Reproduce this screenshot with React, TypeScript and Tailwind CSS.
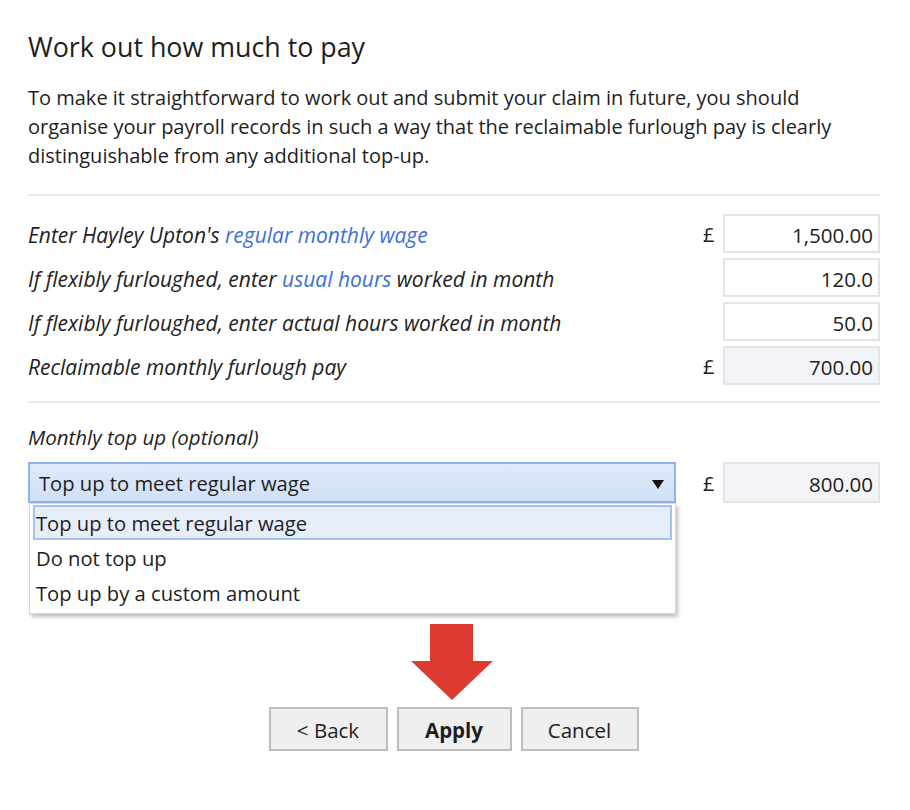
import React from "react";

const font = { fontFamily: '"Open Sans", "Noto Sans", sans-serif' };

function Row({ label, currency, value, readOnly }: { label: React.ReactNode; currency?: boolean; value: string; readOnly?: boolean }) {
  return (
    <div className="flex items-center h-[39px]">
      <div className="flex-1 italic text-[21px] text-[#222] pt-[4px]">{label}</div>
      <div className="w-[20px] text-[20px] text-[#222] pt-[3px]">{currency ? "£" : ""}</div>
      <div
        className={`w-[157px] h-[39px] border-2 border-[#e4e4e4] flex items-center justify-end pr-[5px] pt-[4px] text-[20.5px] text-[#222] ${readOnly ? "bg-[#f3f4f8]" : "bg-white"}`}
      >
        {value}
      </div>
    </div>
  );
}

export default function App() {
  const link = "text-[#3d6fd8]";
  return (
    <div className="w-[910px] h-[810px] bg-white px-[28px] pt-[28px] text-[#1e1e1e]" style={font}>
      <h1 className="text-[26.8px] leading-[38px]">Work out how much to pay</h1>
      <p className="mt-[17px] text-[20px] leading-[29px]">
        To make it straightforward to work out and submit your claim in future, you should
        <br />
        organise your payroll records in such a way that the reclaimable furlough pay is clearly
        <br />
        distinguishable from any additional top-up.
      </p>
      <div className="mt-[24px] mr-[2px] border-t-2 border-[#ececec]" />

      <div className="mt-[18px] mr-[2px] flex flex-col gap-[5px]">
        <Row
          label={<>Enter Hayley Upton's <span className={link}>regular monthly wage</span></>}
          currency
          value="1,500.00"
        />
        <Row
          label={<>If flexibly furloughed, enter <span className={link}>usual hours</span> worked in month</>}
          value="120.0"
        />
        <Row label="If flexibly furloughed, enter actual hours worked in month" value="50.0" />
        <Row label="Reclaimable monthly furlough pay" currency value="700.00" readOnly />
      </div>

      <div className="mt-[16px] mr-[2px] border-t-2 border-[#ececec]" />

      <div className="mt-[20px] italic text-[20.5px] leading-[28px]">Monthly top up (optional)</div>

      <div className="mt-[11px] mr-[2px] flex items-center">
        <div className="relative">
          <div className="w-[648px] h-[41px] border-2 border-[#8fb3ee] bg-gradient-to-b from-[#dfeafa] to-[#cfe0f7] flex items-center pl-[9px] pr-[10px] pt-[2px] text-[20.2px]">
            <span className="flex-1">Top up to meet regular wage</span>
            <svg width="12" height="10" viewBox="0 0 12 10">
              <polygon points="0,1 12,1 6,10" fill="#111" />
            </svg>
          </div>
          <div className="absolute left-[1px] top-[41px] w-[647px] bg-white border border-[#d8d8d8] shadow-[2px_3px_4px_rgba(0,0,0,0.25)] z-10 pt-[1px] pb-[3px] pl-[3px] pr-[3px] text-[20.2px]">
            <div className="h-[35px] flex items-center pl-[1px] pt-[2px] bg-[#e6eefa] border-2 border-[#a5c2f0]">Top up to meet regular wage</div>
            <div className="h-[35px] flex items-center pl-[3px] pt-[2px]">Do not top up</div>
            <div className="h-[35px] flex items-center pl-[3px] pt-[2px]">Top up by a custom amount</div>
          </div>
        </div>
        <div className="ml-[27px] w-[20px] text-[20px] pt-[2px]">£</div>
        <div className="w-[157px] h-[41px] border-2 border-[#e4e4e4] bg-[#f3f4f8] flex items-center justify-end pr-[5px] pt-[3px] text-[20.5px]">
          800.00
        </div>
      </div>

      <div className="mt-[121px] flex justify-center pr-[6px]">
        <svg width="84" height="76" viewBox="0 0 84 76">
          <polygon points="20,0 63,0 63,37 83,37 42,76 1,37 20,37" fill="#dd3a32" />
        </svg>
      </div>

      <div className="mt-[7px] flex justify-center gap-[9px] pr-[3px] text-[20.5px]">
        <button className="w-[119px] h-[44px] pt-[2px] bg-[#efefef] border-2 border-[#bdbdbd]">&lt; Back</button>
        <button className="w-[115px] h-[44px] pt-[2px] bg-[#efefef] border-2 border-[#bdbdbd] font-bold">Apply</button>
        <button className="w-[118px] h-[44px] pt-[2px] bg-[#efefef] border-2 border-[#bdbdbd]">Cancel</button>
      </div>
    </div>
  );
}
